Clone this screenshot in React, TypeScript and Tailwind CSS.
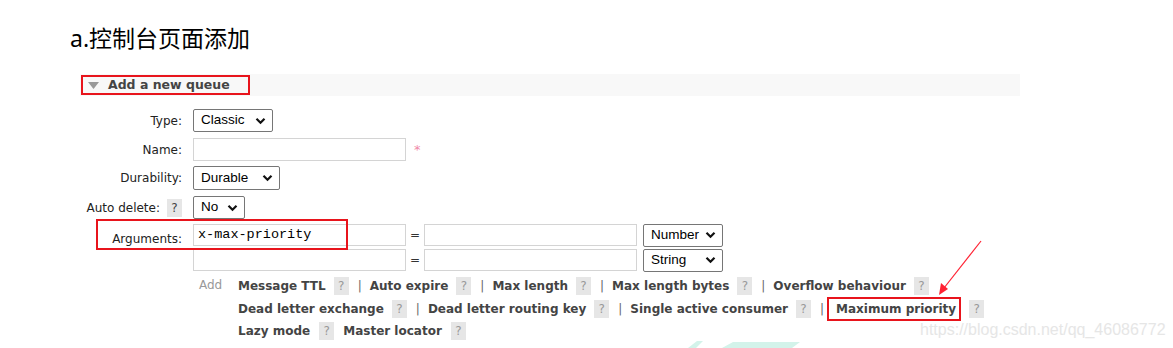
import React from 'react';

const FONT = { fontFamily: '"DejaVu Sans", Verdana, sans-serif' };

const Chevron = () => (
  <svg width="11" height="8" viewBox="0 0 11 8" className="shrink-0">
    <path d="M1.5 1.8 L5.5 5.8 L9.5 1.8" fill="none" stroke="#111" strokeWidth="2.2" />
  </svg>
);

const FakeSelect: React.FC<{ label: string; w: string }> = ({ label, w }) => (
  <div
    className={`flex items-center justify-between h-full ${w} border border-[#767676] rounded-[2px] bg-white pl-[7px] pr-[6px] text-[13.5px] text-black`}
    style={{ fontFamily: '"Liberation Sans", Arial, sans-serif' }}
  >
    <span>{label}</span>
    <Chevron />
  </div>
);

const TextBox: React.FC<{ value?: string }> = ({ value }) => (
  <div
    className="flex items-center w-[213px] h-full border border-[#d4d4d4] bg-white px-[4px] text-[13.5px] text-black"
    style={{ fontFamily: '"Liberation Mono", "Courier New", monospace' }}
  >
    {value}
  </div>
);

const Help: React.FC<{ dark?: boolean }> = ({ dark }) => (
  <span
    className={`inline-flex items-center justify-center w-[15px] h-[18px] bg-[#e6e6e6] text-[12px] font-normal ${dark ? 'text-[#444]' : 'text-[#999]'}`}
  >
    ?
  </span>
);

const Sep = () => <span className="ml-[9px] mr-[8px] font-normal text-[#666]">|</span>;

const Link: React.FC<{ label: string; last?: boolean; boxed?: boolean }> = ({ label, last, boxed }) => (
  <span className="inline-flex items-center">
    {boxed ? (
      <span className="border-2 border-[#e8141c] pl-[7px] pr-[3px] h-[24px] inline-flex items-center -ml-[5px]">
        {label}
      </span>
    ) : (
      <span>{label}</span>
    )}
    <span className="ml-[8px] inline-flex">
      <Help />
    </span>
    {!last && <Sep />}
  </span>
);

const Row: React.FC<{ label: React.ReactNode; h: string; mt: string; children: React.ReactNode }> = ({
  label,
  h,
  mt,
  children,
}) => (
  <div className={`flex items-center ${h} ${mt}`}>
    <div className="w-[102px] flex justify-end items-center text-[12px] text-[#222]">{label}</div>
    <div className="ml-[11px] flex items-center h-full">{children}</div>
  </div>
);

export default function App() {
  return (
    <div className="relative w-[1173px] h-[348px] bg-white overflow-hidden" style={FONT}>
      <div
        className="pl-[70px] pt-[24px] text-[23px] leading-[28px] text-black"
        style={{ fontFamily: '"Noto Sans", "Noto Sans CJK SC", sans-serif' }}
      >
        a.控制台页面添加
      </div>

      <div className="ml-[80px] mt-[22px] w-[940px] h-[22px] bg-[#f8f8f8] flex items-center">
        <div className="ml-[1px] w-[169px] h-[20px] border-2 border-[#e8141c] flex items-center">
          <svg width="11" height="7" viewBox="0 0 11 7" className="ml-[5px]">
            <path d="M0 0 L11 0 L5.5 7 Z" fill="#999" />
          </svg>
          <span className="ml-[9px] text-[12.5px] font-bold text-[#444]">Add a new queue</span>
        </div>
      </div>

      <div className="ml-[80px]">
        <Row label="Type:" h="h-[23px]" mt="mt-[13px]">
          <FakeSelect label="Classic" w="w-[80px]" />
        </Row>
        <Row label="Name:" h="h-[23px]" mt="mt-[6px]">
          <TextBox />
          <span className="ml-[8px] text-[13px] text-[#f08aa8]">*</span>
        </Row>
        <Row label="Durability:" h="h-[24px]" mt="mt-[5px]">
          <FakeSelect label="Durable" w="w-[87px]" />
        </Row>
        <Row
          label={
            <span className="flex items-center">
              Auto delete:
              <span className="ml-[7px] inline-flex">
                <Help dark />
              </span>
            </span>
          }
          h="h-[23px]"
          mt="mt-[6px]"
        >
          <FakeSelect label="No" w="w-[52px]" />
        </Row>
        <Row label={<span className="mt-[8px]">Arguments:</span>} h="h-[22px]" mt="mt-[5px]">
          <TextBox value="x-max-priority" />
          <span className="w-[18px] text-center text-[12px] text-[#333]">=</span>
          <TextBox />
          <div className="ml-[6px] h-[23px]">
            <FakeSelect label="Number" w="w-[80px]" />
          </div>
        </Row>
        <Row label="" h="h-[22px]" mt="mt-[3px]">
          <TextBox />
          <span className="w-[18px] text-center text-[12px] text-[#333]">=</span>
          <TextBox />
          <div className="ml-[6px] h-[23px]">
            <FakeSelect label="String" w="w-[80px]" />
          </div>
        </Row>

        <div className="flex mt-[6px] ml-[119px]">
          <span className="text-[12px] text-[#999] w-[39px] leading-[16px]">Add</span>
          <div className="flex flex-col gap-[4.5px] text-[12px] font-bold text-[#444]">
            <div className="flex items-center h-[18px]">
              <Link label="Message TTL" />
              <Link label="Auto expire" />
              <Link label="Max length" />
              <Link label="Max length bytes" />
              <Link label="Overflow behaviour" last />
            </div>
            <div className="flex items-center h-[18px]">
              <Link label="Dead letter exchange" />
              <Link label="Dead letter routing key" />
              <Link label="Single active consumer" />
              <Link label="Maximum priority" boxed last />
            </div>
            <div className="flex items-center h-[18px] gap-[9px]">
              <span className="inline-flex items-center">
                Lazy mode
                <span className="ml-[9px] inline-flex">
                  <Help />
                </span>
              </span>
              <span className="inline-flex items-center">
                Master locator
                <span className="ml-[9px] inline-flex">
                  <Help />
                </span>
              </span>
            </div>
          </div>
        </div>
      </div>

      {/* annotation: arguments box */}
      <div className="absolute left-[96px] top-[219px] w-[252px] h-[31px] border-2 border-[#e8141c] pointer-events-none" />

      {/* annotation: arrow + partial logo */}
      <svg className="absolute left-0 top-0 pointer-events-none" width="1173" height="348">
        <line x1="981" y1="241" x2="944" y2="288" stroke="#f23" strokeWidth="1.2" />
        <path d="M939 295 L941 283 L948 289 Z" fill="#f23" />
        <path d="M688 348 L697 341 L703 341 L696 348 Z" fill="#d3f3ea" />
        <path d="M722 348 L733 342 L800 342 L792 348 Z" fill="#d3f3ea" />
      </svg>

      {/* watermark */}
      <div
        className="absolute left-[920px] top-[318px] text-[16px] text-[#e6e6e6]"
        style={{ fontFamily: '"Liberation Sans", Arial, sans-serif' }}
      >
        https://blog.csdn.net/qq_46086772
      </div>
    </div>
  );
}
